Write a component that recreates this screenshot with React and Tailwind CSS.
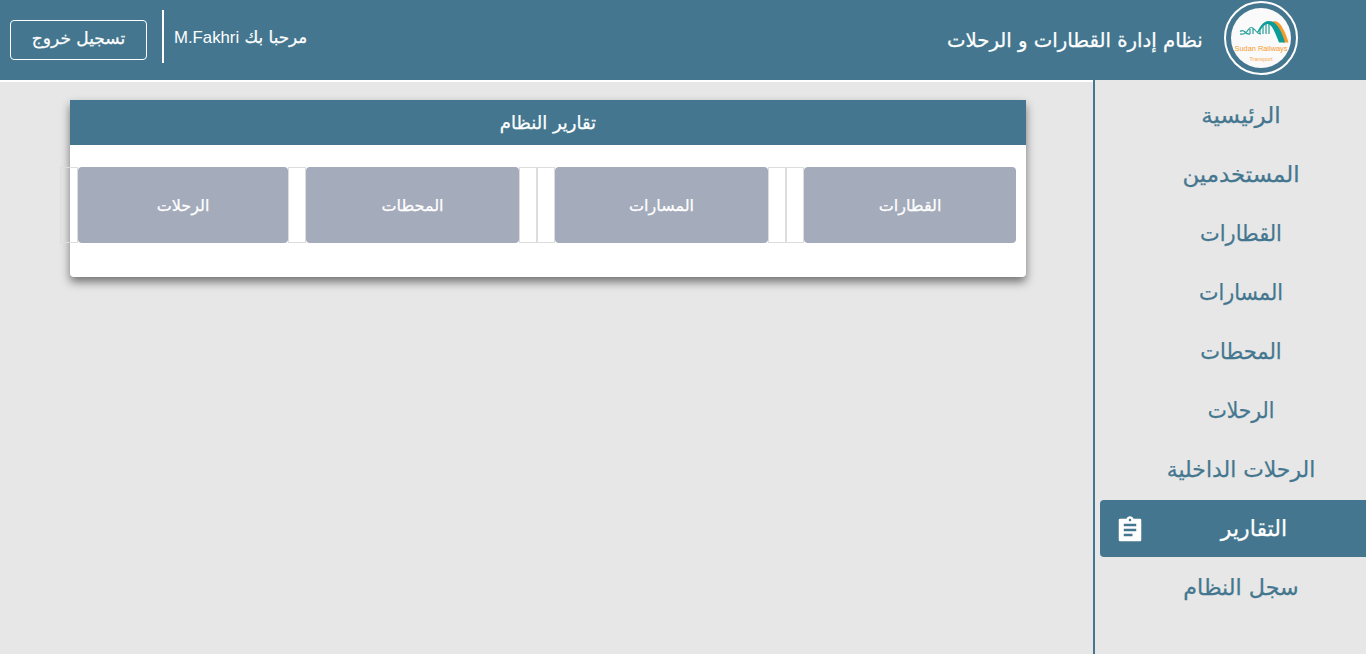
const navItems = [
  { label: 'الرئيسية', stretch: 'scale-x-[1.05]' },
  { label: 'المستخدمين', stretch: 'scale-x-[1.04]' },
  { label: 'القطارات', stretch: 'scale-x-[0.95]' },
  { label: 'المسارات', stretch: 'scale-x-[0.94]' },
  { label: 'المحطات', stretch: 'scale-x-[0.955]' },
  { label: 'الرحلات', stretch: 'scale-x-[0.92]' },
  { label: 'الرحلات الداخلية', stretch: 'scale-x-[0.995]' },
  { label: 'التقارير', active: true },
  { label: 'سجل النظام', stretch: 'scale-x-[1.01]' },
];

function Logo() {
  return (
    <div className="flex h-[74px] w-[74px] shrink-0 items-center justify-center rounded-full border-2 border-white">
      <svg viewBox="0 0 60 60" className="h-[60px] w-[60px] overflow-visible" direction="ltr">
        <circle cx="30" cy="30" r="30" fill="#fafafa" />
        <path d="M41 14C45 12 49 15 51 19C54 24 56 29 57.500 34.500H52C50 27 47 20 41 14Z" fill="#f79a2c" />
        <path d="M26 24C29 20 31 13 38 13C45 13 50 21 54 34.500H48C44 24 41 17 37 16C32 16 30 23 26 25Z" fill="#0d9d98" />
        <path d="M9 23.500Q11.500 21.500 14 24T19 26M9 26Q14 27 17 22Q20 17 24 22Q27 26 30 26M19 21V26M22 20V26M29 21V26M32 17V26M35 16V26M38 16V26" fill="none" stroke="#269d98" strokeWidth="1.2" />
        <text x="30" y="43" textAnchor="middle" textLength="53" lengthAdjust="spacingAndGlyphs" fontFamily="Liberation Sans" fontSize="8" fill="#f79a2c">Sudan Railways</text>
        <text x="30" y="52.500" textAnchor="middle" textLength="23" lengthAdjust="spacingAndGlyphs" fontFamily="Liberation Sans" fontSize="6" fill="#f7a94c">Transport</text>
      </svg>
    </div>
  );
}

function Tile({ label, className }) {
  return (
    <button className={`h-[76px] shrink-0 rounded-[4px] bg-[#a4abbb] pt-px text-center text-[16px] text-white ${className}`}>
      {label}
    </button>
  );
}

function Cell() {
  return <span className="h-[76px] w-[18px] shrink-0 border border-[#ddd]" />;
}

export default function App() {
  return (
    <div dir="rtl" className="flex h-[654px] w-[1366px] flex-col overflow-hidden bg-[#e7e7e7] font-['DejaVu_Sans',sans-serif] text-white [-webkit-text-stroke:0.25px_currentColor]">
      <header className="flex h-20 shrink-0 items-start bg-[#44778f] pr-[68px] pl-[10px]">
        <div className="pt-px [-webkit-text-stroke:0]"><Logo /></div>
        <h1 className="mr-[21px] origin-right scale-x-[0.985] pt-[25px] text-[20px] leading-[30px] whitespace-nowrap">نظام إدارة القطارات و الرحلات</h1>
        <div className="mr-auto origin-left scale-x-[0.985] pt-[25px] text-[17px] leading-[24px] whitespace-nowrap">
          مرحبا بك <span dir="ltr" className="font-['Liberation_Sans'] [-webkit-text-stroke:0]">M.Fakhri</span>
        </div>
        <div className="mt-[10px] mr-[10px] h-[53px] w-[2px] bg-white" />
        <button className="mt-5 mr-[15px] h-10 w-[137px] rounded-[4px] border border-white pb-[2px] text-[17px]">تسجيل خروج</button>
      </header>
      <div className="flex min-h-0 flex-1">
        <nav className="flex w-[273px] shrink-0 flex-col gap-[2px] border-l-2 border-[#44778f] pt-[7px] pl-[5px]">
          {navItems.map(({ label, active, stretch }) => (
            <a key={label} className={`flex h-[57px] shrink-0 items-center text-[22px] ${active ? 'rounded-l-[4px] bg-[#44778f] text-white' : 'text-[#44778f]'}`}>
              {active ? (
                <>
                  <span className="mr-[79px] w-[66px] text-center whitespace-nowrap">{label}</span>
                  <svg viewBox="0 0 24 24" className="mt-[2px] mr-auto ml-[15px] h-[30px] w-[30px]" fill="currentColor">
                    <path d="M20 3h-5.180C14.400 1.840 13.300 1 12 1c-1.300 0-2.400.840-2.820 2H4a1 1 0 0 0-1 1v16a1 1 0 0 0 1 1h16a1 1 0 0 0 1-1V4a1 1 0 0 0-1-1zm-8 0c.550 0 1 .450 1 1s-.450 1-1 1-1-.450-1-1 .450-1 1-1zm2 14H7v-2h7v2zm3-4H7v-2h10v2zm0-4H7V7h10v2z" />
                  </svg>
                </>
              ) : <span className={`mr-[25px] w-[200px] text-center whitespace-nowrap ${stretch}`}>{label}</span>}
            </a>
          ))}
        </nav>
        <main className="flex-1 border-t-2 border-white pt-[18px] pr-[67px]">
          <section className="h-[177px] w-[956px] rounded-b-[4px] bg-white shadow-[0_5px_10px_rgba(0,0,0,0.5)]">
            <h2 className="h-[45px] bg-[#44778f] text-center text-[18px] leading-[45px]">تقارير النظام</h2>
            <div className="mt-[22px] mr-[10px] flex">
              <Tile label="القطارات" className="w-[212px]" /><Cell /><Cell />
              <Tile label="المسارات" className="w-[213px]" /><Cell /><Cell />
              <Tile label="المحطات" className="w-[213px]" /><Cell />
              <Tile label="الرحلات" className="w-[210px]" /><Cell />
            </div>
          </section>
        </main>
      </div>
    </div>
  );
}
